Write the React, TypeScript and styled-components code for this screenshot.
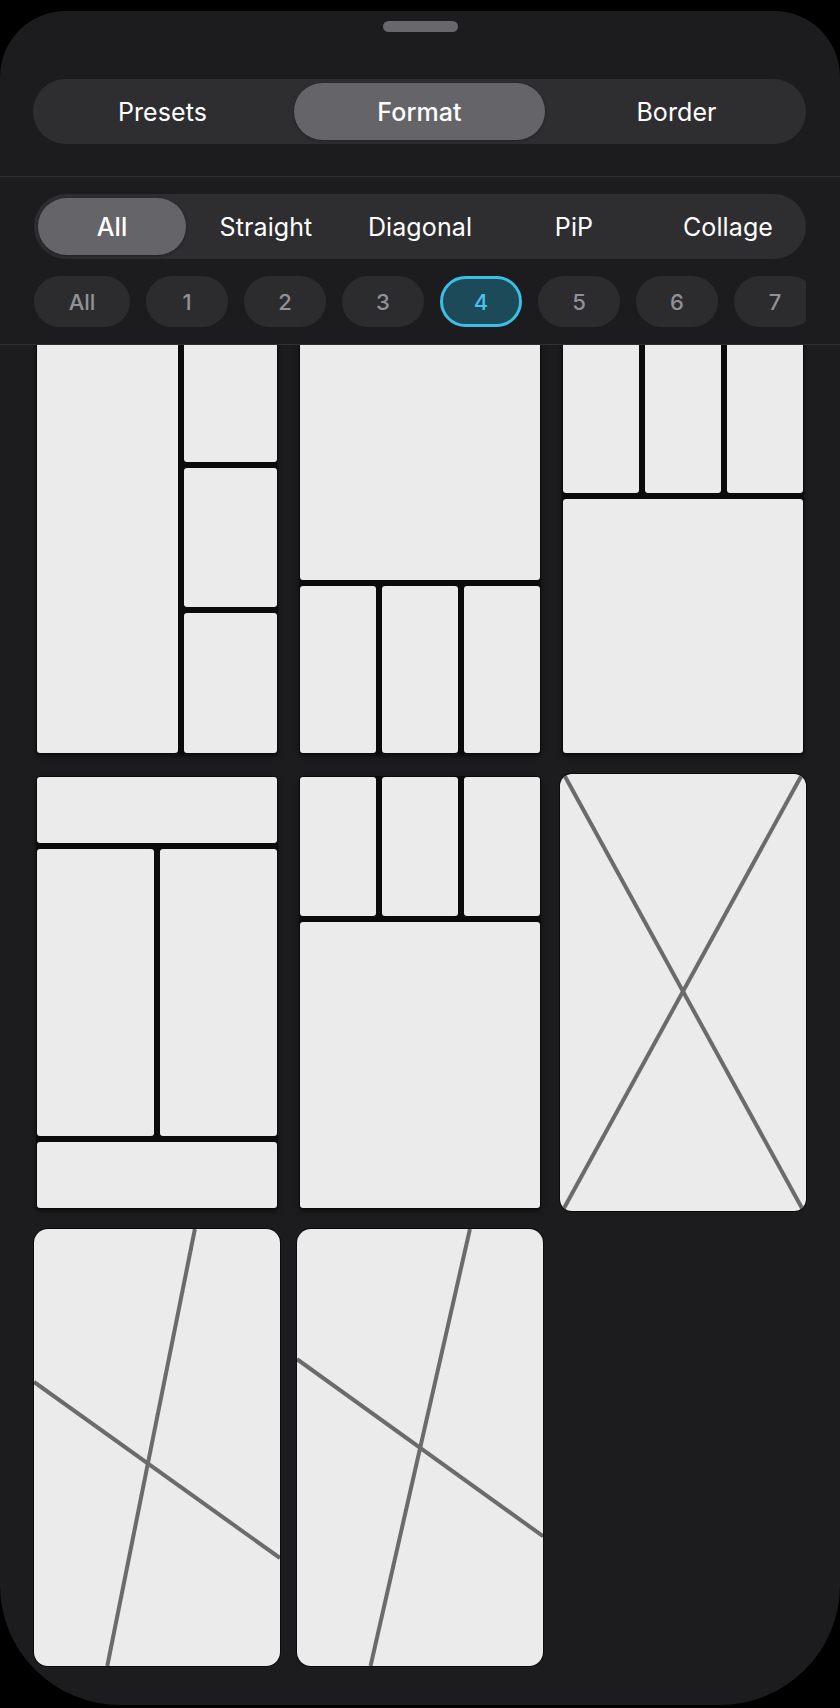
import styled, { createGlobalStyle } from "styled-components";

const GlobalStyle = createGlobalStyle`
  html, body {
    margin: 0;
    padding: 0;
    background: #000;
  }
  body {
    font-family: Inter, "Noto Sans", "Liberation Sans", sans-serif;
    -webkit-font-smoothing: antialiased;
  }
`;

type Line = [number, number, number, number];

type Layout =
  | { kind: "grid"; cols: string; rows: string; areas: string; tiles: string[] }
  | { kind: "diagonal"; radius: number; lines: Line[] };

const layouts: Layout[] = [
  {
    kind: "grid",
    cols: "142fr 93fr",
    rows: "1fr 1fr 1fr",
    areas: `"a b" "a c" "a d"`,
    tiles: ["a", "b", "c", "d"],
  },
  {
    kind: "grid",
    cols: "1fr 1fr 1fr",
    rows: "259fr 168fr",
    areas: `"a a a" "b c d"`,
    tiles: ["a", "b", "c", "d"],
  },
  {
    kind: "grid",
    cols: "1fr 1fr 1fr",
    rows: "172fr 256fr",
    areas: `"a b c" "d d d"`,
    tiles: ["a", "b", "c", "d"],
  },
  {
    kind: "grid",
    cols: "1fr 1fr",
    rows: "66fr 285fr 66fr",
    areas: `"a a" "b c" "d d"`,
    tiles: ["a", "b", "c", "d"],
  },
  {
    kind: "grid",
    cols: "1fr 1fr 1fr",
    rows: "139fr 285fr",
    areas: `"a b c" "d d d"`,
    tiles: ["a", "b", "c", "d"],
  },
  {
    kind: "diagonal",
    radius: 12,
    lines: [
      [2, 0.5, 98.5, 99.5],
      [98, 0.5, 1.5, 99.5],
    ],
  },
  {
    kind: "diagonal",
    radius: 14,
    lines: [
      [65.4, 0, 29.8, 100],
      [0, 35, 100, 75.3],
    ],
  },
  {
    kind: "diagonal",
    radius: 14,
    lines: [
      [70.3, 0, 29.9, 100],
      [0, 29.8, 100, 70.3],
    ],
  },
];

const tabs = ["Presets", "Format", "Border"];
const categories = ["All", "Straight", "Diagonal", "PiP", "Collage"];
const counts = ["All", "1", "2", "3", "4", "5", "6", "7"];

const App = () => {
  return (
    <>
      <GlobalStyle />
      <Screen>
        <Sheet>
          <Handle />
          <Header>
            <Segmented>
              {tabs.map((t) => (
                <Segment key={t} $active={t === "Format"}>
                  {t}
                </Segment>
              ))}
            </Segmented>
          </Header>
          <Divider />
          <Filters>
            <Segmented>
              {categories.map((c) => (
                <Segment key={c} $active={c === "All"}>
                  {c}
                </Segment>
              ))}
            </Segmented>
            <CountRow>
              {counts.map((n) => (
                <CountPill key={n} $wide={n === "All"} $active={n === "4"}>
                  {n}
                </CountPill>
              ))}
            </CountRow>
          </Filters>
          <Divider />
          <Scroller>
            <Grid>
              {layouts.map((l, i) =>
                l.kind === "grid" ? (
                  <Card key={i} $cols={l.cols} $rows={l.rows} $areas={l.areas}>
                    {l.tiles.map((t) => (
                      <Tile key={t} $area={t} />
                    ))}
                  </Card>
                ) : (
                  <DiagCard key={i} $radius={l.radius}>
                    <svg viewBox="0 0 100 100" preserveAspectRatio="none">
                      {l.lines.map((ln, j) => (
                        <line
                          key={j}
                          x1={ln[0]}
                          y1={ln[1]}
                          x2={ln[2]}
                          y2={ln[3]}
                          stroke="#6b6b6b"
                          strokeWidth={4}
                          vectorEffect="non-scaling-stroke"
                        />
                      ))}
                    </svg>
                  </DiagCard>
                )
              )}
            </Grid>
          </Scroller>
        </Sheet>
      </Screen>
    </>
  );
};

const Screen = styled.div`
  width: 840px;
  height: 1708px;
  padding-top: 11px;
  padding-bottom: 3px;
  box-sizing: border-box;
  background: #000;
`;

const Sheet = styled.div`
  height: 100%;
  background: #1c1c1e;
  border-radius: 66px 66px 120px 120px;
  display: flex;
  flex-direction: column;
  overflow: hidden;
`;

const Handle = styled.div`
  width: 75px;
  height: 11px;
  border-radius: 6px;
  background: #68686c;
  margin: 10px auto 0;
  flex-shrink: 0;
`;

const Header = styled.div`
  padding: 47px 34px 32px 33px;
`;

const Divider = styled.div`
  height: 1px;
  background: #303033;
  flex-shrink: 0;
`;

const Filters = styled.div`
  padding: 17px 34px 17px 34px;
  display: flex;
  flex-direction: column;
  gap: 17px;
`;

const Segmented = styled.div`
  display: flex;
  gap: 6px;
  height: 65px;
  box-sizing: border-box;
  padding: 4px;
  border-radius: 33px;
  background: #2e2e31;
`;

const Segment = styled.div<{ $active?: boolean }>`
  flex: 1;
  display: flex;
  align-items: center;
  justify-content: center;
  border-radius: 29px;
  font-size: 25px;
  font-weight: ${(p) => (p.$active ? 500 : 400)};
  letter-spacing: 0.1px;
  color: #fff;
  background: ${(p) => (p.$active ? "#656469" : "transparent")};
  box-shadow: ${(p) => (p.$active ? "0 1px 3px rgba(0,0,0,0.3)" : "none")};
`;

const CountRow = styled.div`
  display: flex;
  gap: 16px;
  overflow: hidden;
`;

const CountPill = styled.div<{ $wide?: boolean; $active?: boolean }>`
  flex: 0 0 ${(p) => (p.$wide ? 96 : 82)}px;
  height: 51px;
  box-sizing: border-box;
  display: flex;
  align-items: center;
  justify-content: center;
  border-radius: 26px;
  font-size: 22px;
  font-weight: 500;
  color: ${(p) => (p.$active ? "#46c3ee" : "#929296")};
  background: ${(p) => (p.$active ? "#1d4a59" : "#2c2c2f")};
  border: ${(p) => (p.$active ? "3px solid #3bbfe6" : "none")};
`;

const Scroller = styled.div`
  flex: 1;
  overflow: hidden;
`;

const Grid = styled.div`
  display: grid;
  grid-template-columns: repeat(3, 242px);
  grid-auto-rows: 433px;
  column-gap: 21px;
  row-gap: 22px;
  padding: 0 34px 0 36px;
  margin-top: -24px;
`;

const Card = styled.div<{ $cols: string; $rows: string; $areas: string }>`
  display: grid;
  grid-template-columns: ${(p) => p.$cols};
  grid-template-rows: ${(p) => p.$rows};
  grid-template-areas: ${(p) => p.$areas};
  gap: 6px;
  padding: 1px;
  background: #0b0b0c;
  border-radius: 4px;
  box-shadow: 0 3px 4px rgba(0, 0, 0, 0.45);
`;

const Tile = styled.div<{ $area: string }>`
  grid-area: ${(p) => p.$area};
  background: #ebebeb;
  border-radius: 3px;
`;

const DiagCard = styled.div<{ $radius: number }>`
  margin: -2px;
  background: #ebebeb;
  border-radius: ${(p) => p.$radius}px;
  overflow: hidden;
  box-shadow: 0 0 0 1px #0b0b0c;

  svg {
    display: block;
    width: 100%;
    height: 100%;
  }
`;

export default App;
